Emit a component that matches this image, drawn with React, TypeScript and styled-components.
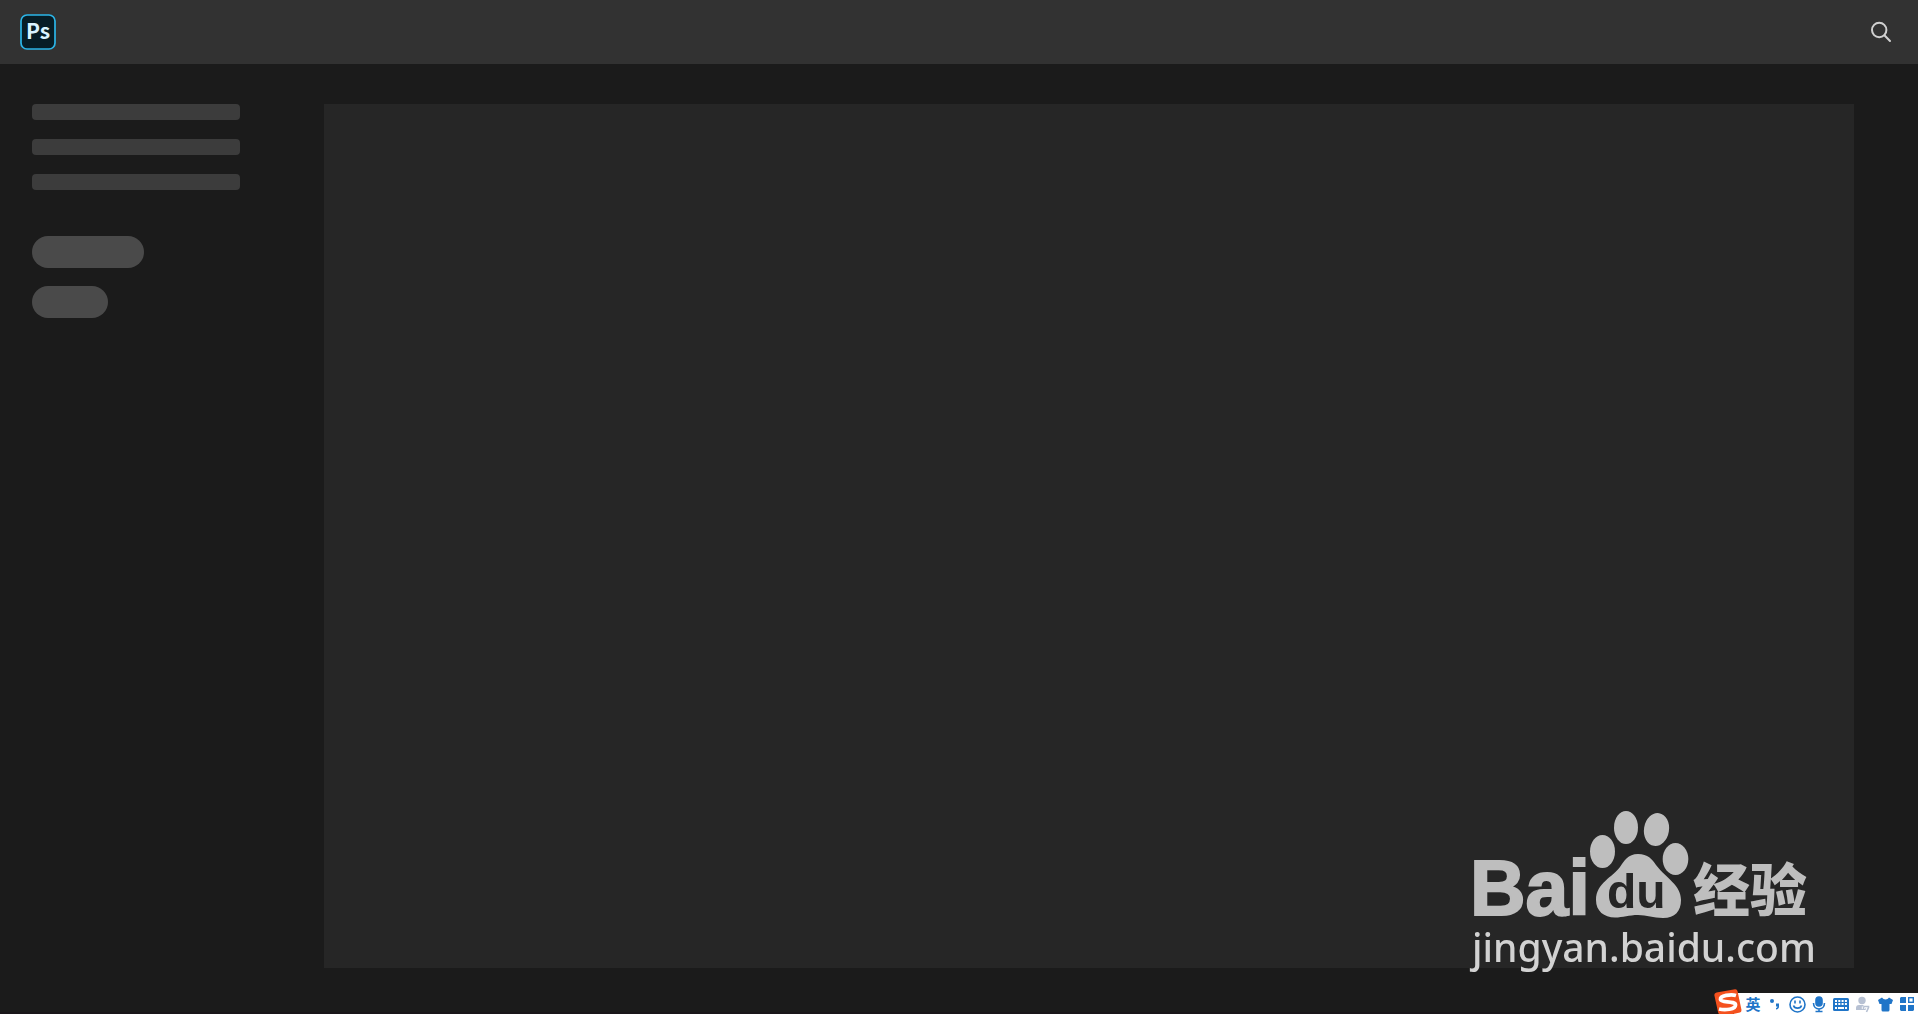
import React from "react";
import styled, { createGlobalStyle } from "styled-components";

const GlobalStyle = createGlobalStyle`
  *, *::before, *::after { box-sizing: border-box; }
  body { margin: 0; background: #1b1b1b; font-family: "Noto Sans", "Noto Sans CJK SC", sans-serif; }
`;

const Page = styled.div`
  display: flex;
  flex-direction: column;
  min-height: 100vh;
  background: #1b1b1b;
  border-bottom: 2px solid #1a161a;
`;

const Header = styled.header`
  display: flex;
  align-items: center;
  justify-content: space-between;
  height: 64px;
  padding: 0 24px 0 20px;
  background: #323232;
`;

const AppLink = styled.a`
  display: flex;
  width: 36px;
  height: 36px;
`;

const IconButton = styled.button`
  display: flex;
  align-items: center;
  justify-content: center;
  padding: 0;
  border: 0;
  background: transparent;
  color: #d0d0d0;
  cursor: pointer;
`;

const Content = styled.div`
  display: flex;
  flex: 1;
  gap: 84px;
  padding: 40px 64px 44px 32px;
`;

const Sidebar = styled.aside`
  display: flex;
  flex-direction: column;
  flex: none;
  gap: 46px;
  width: 208px;
`;

const LineGroup = styled.div`
  display: flex;
  flex-direction: column;
  gap: 19px;
`;

const PillGroup = styled.div`
  display: flex;
  flex-direction: column;
  gap: 18px;
`;

const Line = styled.div`
  height: 16px;
  border-radius: 4px;
  background: #3c3c3c;
`;

const Pill = styled.div<{ $width: number }>`
  width: ${({ $width }) => $width}px;
  height: 32px;
  border-radius: 16px;
  background: #4a4a4a;
`;

const Canvas = styled.main`
  flex: 1;
  background: #262626;
`;

const Watermark = styled.div`
  position: fixed;
  right: 100px;
  bottom: 39px;
  width: 350px;
  color: #d2d2d2;
  pointer-events: none;
`;

const Url = styled.div`
  margin-top: -17px;
  padding-left: 4px;
  font-size: 39px;
  font-weight: 500;
  line-height: 56px;
  white-space: nowrap;
`;

const BrandArt = styled.svg`
  display: block;
  width: 350px;
  height: 128px;
  fill: #bebebe;
`;

const InputBar = styled.div`
  position: fixed;
  right: 0;
  bottom: 0;
  display: flex;
  align-items: flex-end;
  height: 25px;
`;

const SogouButton = styled(IconButton)`
  position: relative;
  width: 28px;
  height: 25px;
`;

const Tools = styled.div`
  display: flex;
  align-items: flex-end;
  height: 21px;
  margin-left: -8px;
  padding-left: 8px;
  background: #ffffff;
`;

const Tool = styled.button`
  display: flex;
  align-items: center;
  justify-content: center;
  width: 22px;
  height: 20px;
  padding: 0;
  border: 0;
  background: transparent;
  color: #2075c8;
  font: 700 15px/20px "Noto Sans CJK SC", sans-serif;
  cursor: pointer;

  svg { flex: none; }
`;

function PhotoshopMark() {
  return (
    <svg width="36" height="36" viewBox="0 0 36 36" aria-hidden="true">
      <rect x="1" y="1" width="34" height="34" rx="6" fill="#071d26" stroke="#2bb5e8" strokeWidth="1.7" />
      <text x="6" y="25" fill="#d9f3ff" fontFamily="'Noto Sans CJK SC', sans-serif" fontWeight="700" fontSize="21">Ps</text>
    </svg>
  );
}

function BaiduLogo() {
  return (
    <BrandArt viewBox="1468 808 350 128" aria-hidden="true">
      <text x="1470" y="915" stroke="#bebebe" strokeWidth="2" fontFamily="'Liberation Sans', sans-serif" fontWeight="700" fontSize="77">Bai</text>
      <ellipse cx="1602.500" cy="851.500" rx="12.500" ry="16.500" />
      <ellipse cx="1626" cy="827.500" rx="12" ry="16.500" />
      <ellipse cx="1656.500" cy="829.500" rx="12.500" ry="16.500" transform="rotate(9 1656.500 829.500)" />
      <ellipse cx="1675.500" cy="859" rx="12.800" ry="16" />
      <path d="M1638 854C1628 854 1624 861 1620 867C1613 877 1596 883 1596 900C1596 911 1604 917.500 1615 917.500C1623 917.500 1629 915 1638 915C1647 915 1653 918 1663 918C1675 918 1681 911 1681 900C1681 885 1667 879 1656 865C1652 859 1648 854 1638 854Z" />
      <text x="1607" y="908" fill="#262626" fontFamily="'Liberation Sans', sans-serif" fontWeight="700" fontSize="48">du</text>
      <text x="1693" y="911" fontFamily="'Noto Sans CJK SC', sans-serif" fontWeight="900" fontSize="57">经验</text>
    </BrandArt>
  );
}

function SearchIcon() {
  return (
    <svg width="24" height="24" viewBox="0 0 24 24" fill="none" stroke="currentColor" strokeWidth="2" strokeLinecap="round" aria-hidden="true">
      <circle cx="9.200" cy="10" r="7.200" />
      <path d="M14.400 15.200L20 21" />
    </svg>
  );
}

function SogouIcon() {
  return (
    <svg width="28" height="25" viewBox="0 0 28 25" aria-hidden="true">
      <path d="M2.500 3.500L21 .2Q23 0 23.500 2L27.500 21Q27.500 23 26 23.500L19 25H5Q4.300 24.500 4 23L.3 6Q.2 4 2.500 3.500Z" fill="#f4511e" />
      <path d="M22 6.500C17 5 6 6.500 6.500 10.500C7 14 21.500 11.500 21.500 16C21.500 20.500 11 21.500 5 20" fill="none" stroke="#fff" strokeWidth="3.800" />
    </svg>
  );
}

function PunctuationIcon() {
  return (
    <svg width="12" height="16" viewBox="0 0 12 16" fill="currentColor" aria-hidden="true">
      <circle cx="3" cy="5" r="2" />
      <path d="M7 7.500H10V10.500Q10 13 7 13.500V12Q8.500 11.500 8.500 10.500H7Z" />
    </svg>
  );
}

function SmileIcon() {
  return (
    <svg width="17" height="17" viewBox="0 0 17 17" fill="none" stroke="currentColor" strokeWidth="1.600" aria-hidden="true">
      <circle cx="8.500" cy="8.500" r="7.500" />
      <path d="M6 4.500V7.500M11 4.500V7.500M4.500 9.500C5.500 13 11.500 13 12.500 9.500" />
    </svg>
  );
}

function MicIcon() {
  return (
    <svg width="14" height="17" viewBox="0 0 14 17" fill="none" stroke="currentColor" strokeWidth="1.600" aria-hidden="true">
      <rect x="4" y="1" width="6" height="9" rx="3" fill="currentColor" />
      <path d="M1.500 7C1.500 15 12.500 15 12.500 7M7 13V16M3.500 15.500H10.500" />
    </svg>
  );
}

function KeyboardIcon() {
  return (
    <svg width="16" height="13" viewBox="0 0 16 13" aria-hidden="true">
      <rect width="16" height="13" rx="1.500" fill="currentColor" />
      <path d="M2 3H14M2 6H14" stroke="#fff" strokeWidth="2" strokeDasharray="2 1.300" />
      <path d="M2 10H4M5 10H11M12 10H14" stroke="#fff" strokeWidth="2" />
    </svg>
  );
}

function UserIcon() {
  return (
    <svg width="16" height="17" viewBox="0 0 16 17" aria-hidden="true">
      <circle cx="7" cy="4.500" r="3.700" fill="#b7c1d3" />
      <path d="M1 14V12Q1 9 4 9H10Q13 9 13 12V14Z" fill="#b7c1d3" />
      <path d="M8.500 10.500H13.500V11.500L11.500 16M8.500 10.500V13" fill="none" stroke="#fff" strokeWidth="3.400" />
      <path d="M8.500 10.500H13.500V11.500L11.500 16M8.500 10.500V13" fill="none" stroke="#b7c1d3" strokeWidth="1.600" />
    </svg>
  );
}

function ShirtIcon() {
  return (
    <svg width="15" height="15" viewBox="0 0 15 15" fill="currentColor" aria-hidden="true">
      <path d="M4 .5C5.500 3 9.500 3 11 .5L15 3L13.500 7H11.500V13Q11.500 14.500 10 14.500H5Q3.500 14.500 3.500 13V7H1.500L0 3Z" />
    </svg>
  );
}

function GridIcon() {
  return (
    <svg width="14" height="14" viewBox="0 0 14 14" fill="currentColor" aria-hidden="true">
      <path d="M1 0H6V6H0V1ZM0 8H6V14H1L0 13ZM8 8H14V13L13 14H8Z" />
      <rect x="8.700" y="0.700" width="4.600" height="4.600" fill="none" stroke="currentColor" strokeWidth="1.400" />
    </svg>
  );
}

const tools = [
  { label: "标点", icon: <PunctuationIcon /> },
  { label: "表情", icon: <SmileIcon /> },
  { label: "语音", icon: <MicIcon /> },
  { label: "键盘", icon: <KeyboardIcon /> },
  { label: "账户", icon: <UserIcon /> },
  { label: "皮肤", icon: <ShirtIcon /> },
  { label: "工具箱", icon: <GridIcon /> },
];

export default function App() {
  return (
    <>
      <GlobalStyle />
      <Page>
        <Header>
          <AppLink href="#" aria-label="Photoshop"><PhotoshopMark /></AppLink>
          <IconButton type="button" aria-label="Search"><SearchIcon /></IconButton>
        </Header>
        <Content>
          <Sidebar>
            <LineGroup><Line /><Line /><Line /></LineGroup>
            <PillGroup><Pill $width={112} /><Pill $width={76} /></PillGroup>
          </Sidebar>
          <Canvas />
        </Content>
      </Page>
      <Watermark>
        <BaiduLogo />
        <Url>jingyan.baidu.com</Url>
      </Watermark>
      <InputBar>
        <SogouButton type="button" aria-label="搜狗输入法"><SogouIcon /></SogouButton>
        <Tools>
          <Tool type="button">英</Tool>
          {tools.map(({ label, icon }) => (
            <Tool key={label} type="button" aria-label={label}>{icon}</Tool>
          ))}
        </Tools>
      </InputBar>
    </>
  );
}
